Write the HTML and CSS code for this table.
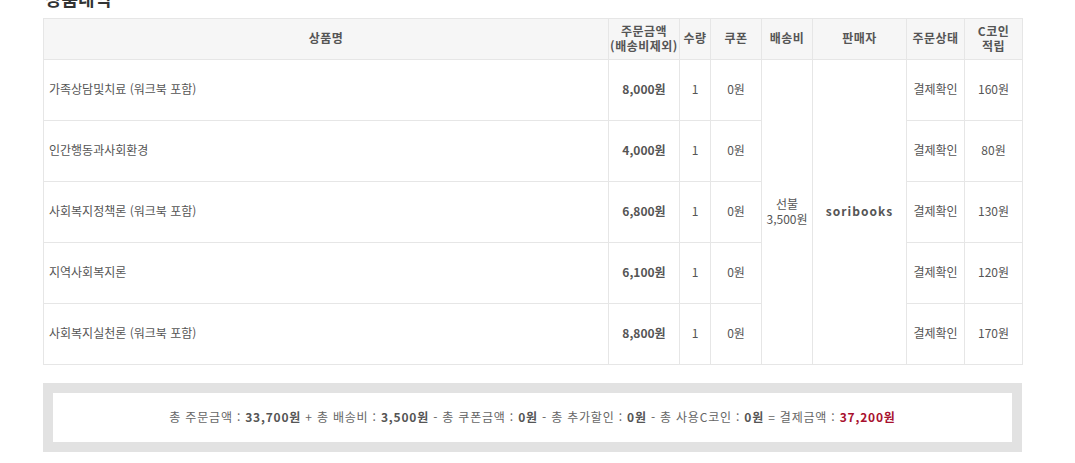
FILE: index.html
```html
<!DOCTYPE html>
<html lang="ko">
<head>
<meta charset="utf-8">
<link rel="stylesheet" href="styles.css">
</head>
<body>
<div class="page">
  <h2 class="title">상품내역</h2>
  <table class="orders">
    <colgroup>
      <col class="c-name"><col class="c-price"><col class="c-qty"><col class="c-coupon"><col class="c-ship"><col class="c-seller"><col class="c-status"><col class="c-coin">
    </colgroup>
    <thead>
      <tr>
        <th>상품명</th>
        <th>주문금액<br>(배송비제외)</th>
        <th>수량</th>
        <th>쿠폰</th>
        <th>배송비</th>
        <th>판매자</th>
        <th>주문상태</th>
        <th>C코인<br>적립</th>
      </tr>
    </thead>
    <tbody>
      <tr>
        <td class="name">가족상담및치료 (워크북 포함)</td>
        <td class="price">8,000원</td>
        <td>1</td>
        <td>0원</td>
        <td rowspan="5">선불<br>3,500원</td>
        <td rowspan="5" class="seller">soribooks</td>
        <td>결제확인</td>
        <td>160원</td>
      </tr>
      <tr>
        <td class="name">인간행동과사회환경</td>
        <td class="price">4,000원</td>
        <td>1</td>
        <td>0원</td>
        <td>결제확인</td>
        <td>80원</td>
      </tr>
      <tr>
        <td class="name">사회복지정책론 (워크북 포함)</td>
        <td class="price">6,800원</td>
        <td>1</td>
        <td>0원</td>
        <td>결제확인</td>
        <td>130원</td>
      </tr>
      <tr>
        <td class="name">지역사회복지론</td>
        <td class="price">6,100원</td>
        <td>1</td>
        <td>0원</td>
        <td>결제확인</td>
        <td>120원</td>
      </tr>
      <tr>
        <td class="name">사회복지실천론 (워크북 포함)</td>
        <td class="price">8,800원</td>
        <td>1</td>
        <td>0원</td>
        <td>결제확인</td>
        <td>170원</td>
      </tr>
    </tbody>
  </table>
  <div class="summary">
    <div class="summary-inner">
      총 주문금액 : <b>33,700원</b> + 총 배송비 : <b>3,500원</b> - 총 쿠폰금액 : <b>0원</b> - 총 추가할인 : <b>0원</b> - 총 사용C코인 : <b>0원</b> = 결제금액 : <b class="total">37,200원</b>
    </div>
  </div>
</div>
</body>
</html>
```

FILE: styles.css
```css
html, body {
  margin: 0;
  padding: 0;
  background: #fff;
}
body {
  font-family: "Noto Sans CJK KR", "Noto Sans", sans-serif;
  font-size: 12px;
  color: #555;
  overflow: hidden;
}
.page {
  padding-left: 43px;
  width: 979px;
}
.title {
  margin: -13px 0 0 2px;
  height: 31px;
  font-size: 18px;
  line-height: 22px;
  font-weight: bold;
  color: #333;
}
.orders {
  width: 979px;
  table-layout: fixed;
  border-collapse: collapse;
  border: 1px solid #e6e6e6;
}
.c-name { width: 565px; }
.c-price { width: 71px; }
.c-qty { width: 31px; }
.c-coupon { width: 51px; }
.c-ship { width: 51px; }
.c-seller { width: 94px; }
.c-status { width: 58px; }
.c-coin { width: 58px; }
.orders th,
.orders td {
  border: 1px solid #e6e6e6;
  text-align: center;
  padding: 0;
  font-size: 12px;
  line-height: 15px;
  color: #555;
}
.orders th {
  height: 37px;
  padding-bottom: 3px;
  background: #f6f6f6;
  font-weight: bold;
  letter-spacing: 0.5px;
}
.orders td {
  height: 57px;
  padding-bottom: 3px;
}
.orders td.name {
  text-align: left;
  padding-left: 5px;
}
.orders td.price {
  font-weight: bold;
}
.orders td.seller {
  font-weight: bold;
  letter-spacing: 1px;
}
.summary {
  margin-top: 18px;
  background: #e2e2e2;
  padding: 10px;
}
.summary-inner {
  background: #fff;
  height: 49px;
  line-height: 47px;
  text-align: center;
  color: #666;
  font-size: 12px;
  letter-spacing: 0.8px;
}
.summary-inner b {
  color: #555;
}
.summary-inner b.total {
  color: #a8102e;
}
```
